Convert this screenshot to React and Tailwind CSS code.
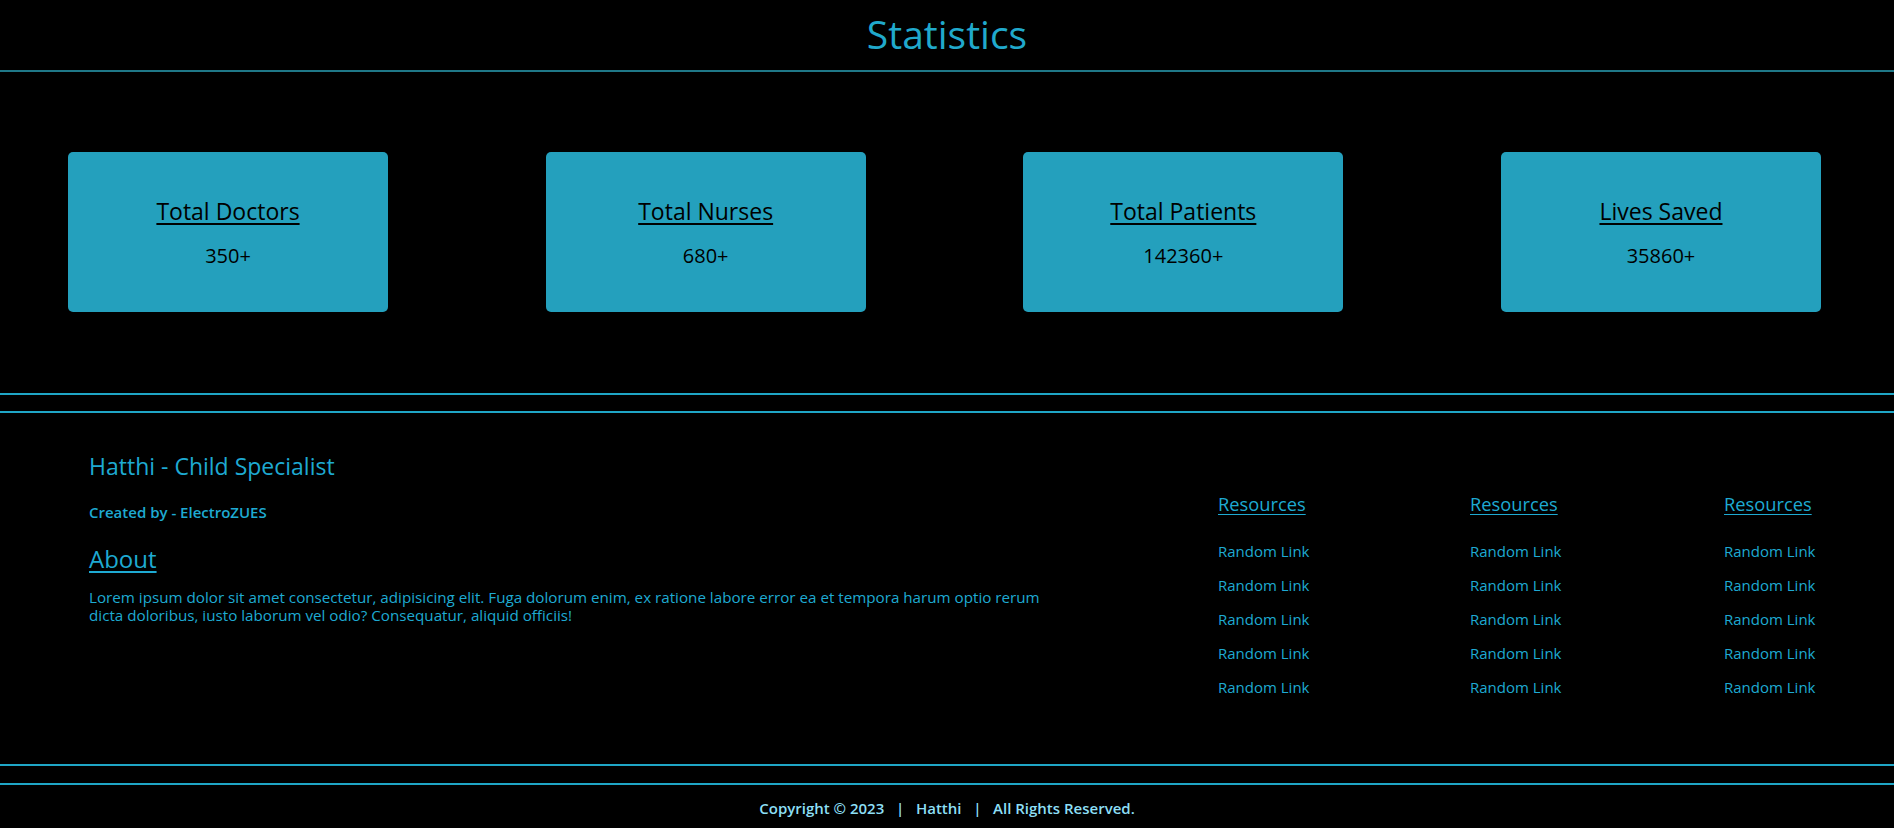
const stats = [
  { title: 'Total Doctors', value: '350+' },
  { title: 'Total Nurses', value: '680+' },
  { title: 'Total Patients', value: '142360+' },
  { title: 'Lives Saved', value: '35860+' },
]

const linkCols = [0, 1, 2]
const links = [0, 1, 2, 3, 4]

function StatCard({ title, value }) {
  return (
    <div className="flex h-[160px] w-[320px] flex-col items-center rounded-[5px] bg-[#24a0bd] pt-[43px] text-black">
      <h3 className="text-[23px] leading-[32px] underline underline-offset-[3px]">{title}</h3>
      <p className="mt-[15px] text-[20px] leading-[28px]">{value}</p>
    </div>
  )
}

export default function App() {
  return (
    <div className="min-h-screen bg-black font-['Open_Sans',sans-serif]">
      {/* header */}
      <header className="flex h-[70px] items-center justify-center pb-[4px]">
        <h1 className="text-[39px] leading-none text-[#20a9cc]">Statistics</h1>
      </header>
      <div className="h-[2px] bg-[#1f7888]" />

      {/* stat cards */}
      <section className="flex justify-between pt-[80px] pr-[73px] pb-[81px] pl-[68px]">
        {stats.map((s) => (
          <StatCard key={s.title} {...s} />
        ))}
      </section>
      <div className="h-[2px] bg-[#1fa6c6]" />
      <div className="h-[16px]" />
      <div className="h-[2px] bg-[#1fa6c6]" />

      {/* footer */}
      <footer className="flex h-[351px] text-[#1eaad2]">
        <div className="w-[1218px] pt-[36px] pl-[89px]">
          <h2 className="text-[23px] leading-[34px]">Hatthi - Child Specialist</h2>
          <p className="mt-[19px] text-[15px] font-semibold leading-[20px]">Created by - ElectroZUES</p>
          <h2 className="mt-[20px] text-[24px] leading-[34px] underline underline-offset-[3px]">About</h2>
          <p className="mt-[12px] w-[1000px] text-[15.2px] leading-[18px]">
            Lorem ipsum dolor sit amet consectetur, adipisicing elit. Fuga dolorum enim, ex ratione labore error ea et tempora harum optio rerum
            <br />
            dicta doloribus, iusto laborum vel odio? Consequatur, aliquid officiis!
          </p>
        </div>
        <div className="grid grid-cols-[252px_254px_auto] pt-[78px]">
          {linkCols.map((c) => (
            <div key={c} className="flex flex-col">
              <h3 className="text-[18.3px] leading-[26px] underline underline-offset-[3px]">Resources</h3>
              <ul className="mt-[17px] flex flex-col">
                {links.map((l) => (
                  <li key={l} className="text-[15px] leading-[34px]">
                    <a href="#">Random Link</a>
                  </li>
                ))}
              </ul>
            </div>
          ))}
        </div>
      </footer>
      <div className="h-[2px] bg-[#1fa6c6]" />
      <div className="h-[17px]" />
      <div className="h-[2px] bg-[#1fa6c6]" />

      {/* copyright */}
      <div className="flex h-[43px] items-center justify-center whitespace-pre pt-[3px] text-[15px] font-semibold text-[#8ddff5]">
        {'Copyright © 2023   |   Hatthi   |   All Rights Reserved.'}
      </div>
    </div>
  )
}
